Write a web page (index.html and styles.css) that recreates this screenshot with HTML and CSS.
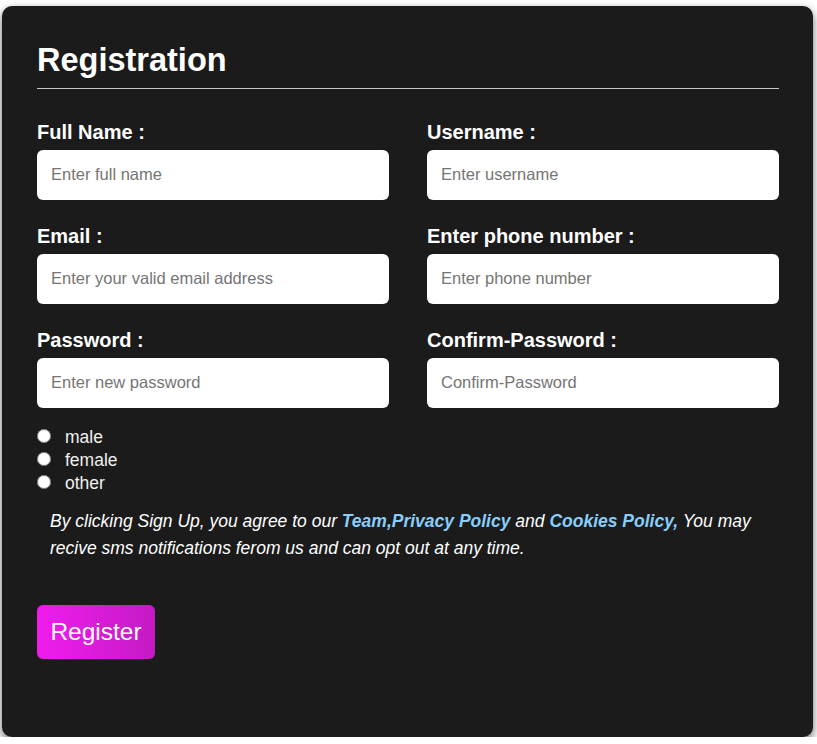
FILE: index.html
```html
<!DOCTYPE html>
<html lang="en">
<head>
<meta charset="utf-8">
<title>Registration</title>
<link rel="stylesheet" href="styles.css">
</head>
<body>
<div class="card">
  <h1 class="title">Registration</h1>
  <form class="form">
    <div class="grid">
      <div class="field">
        <label class="label">Full Name :</label>
        <input class="input" type="text" placeholder="Enter full name">
      </div>
      <div class="field">
        <label class="label">Username :</label>
        <input class="input" type="text" placeholder="Enter username">
      </div>
      <div class="field">
        <label class="label">Email :</label>
        <input class="input" type="text" placeholder="Enter your valid email address">
      </div>
      <div class="field">
        <label class="label">Enter phone number :</label>
        <input class="input" type="text" placeholder="Enter phone number">
      </div>
      <div class="field">
        <label class="label">Password :</label>
        <input class="input" type="password" placeholder="Enter new password">
      </div>
      <div class="field">
        <label class="label">Confirm-Password :</label>
        <input class="input" type="password" placeholder="Confirm-Password">
      </div>
    </div>
    <div class="radios">
      <label class="radio-row"><input class="radio" type="radio" name="gender"><span>male</span></label>
      <label class="radio-row"><input class="radio" type="radio" name="gender"><span>female</span></label>
      <label class="radio-row"><input class="radio" type="radio" name="gender"><span>other</span></label>
    </div>
    <p class="terms">By clicking Sign Up, you agree to our <a class="link" href="#">Team,Privacy Policy</a> and <a class="link" href="#">Cookies Policy,</a> You may recive sms notifications ferom us and can opt out at any time.</p>
    <button class="button" type="button">Register</button>
  </form>
</div>
</body>
</html>
```

FILE: styles.css
```css
html, body {
  margin: 0;
  padding: 0;
  background: #ffffff;
}

body {
  padding: 6px 0 0 2px;
  font-family: "Liberation Sans", Arial, sans-serif;
}

.card {
  box-sizing: border-box;
  width: 811px;
  height: 731px;
  background: #1b1b1b;
  border-radius: 10px;
  box-shadow: 0 4px 10px rgba(0, 0, 0, 0.6);
  padding: 36px 34px 0 35px;
  color: #ffffff;
}

.title {
  margin: 0;
  font-size: 32.5px;
  line-height: 37px;
  font-weight: bold;
  padding-bottom: 9px;
  border-bottom: 1px solid #c8c8c8;
}

.form {
  margin: 0;
}

.grid {
  display: grid;
  grid-template-columns: 352px 352px;
  column-gap: 38px;
  row-gap: 25px;
  margin-top: 32px;
}

.field {
  display: flex;
  flex-direction: column;
}

.label {
  font-size: 20px;
  line-height: 23px;
  font-weight: bold;
  margin-bottom: 6px;
}

.input {
  box-sizing: border-box;
  height: 50px;
  width: 100%;
  border: none;
  border-radius: 6px;
  background: #ffffff;
  padding: 0 14px 2px 14px;
  font-family: "Liberation Sans", Arial, sans-serif;
  font-size: 16.5px;
  color: #222;
  outline: none;
}

.input::placeholder {
  color: #757575;
}

.radios {
  margin-top: 18px;
  display: flex;
  flex-direction: column;
}

.radio-row {
  display: flex;
  align-items: center;
  height: 23px;
  font-size: 17.5px;
  color: #f0f0f0;
}

.radio {
  margin: 0 14px 4px 0;
  width: 14px;
  height: 14px;
}

.terms {
  margin: 13px 0 0 0;
  padding: 0 13px;
  font-size: 17.5px;
  line-height: 27px;
  font-style: italic;
  color: #ffffff;
}

.link {
  color: #87cefa;
  font-weight: bold;
  text-decoration: none;
}

.button {
  display: block;
  margin-top: 43px;
  width: 118px;
  height: 54px;
  border: none;
  border-radius: 6px;
  background: linear-gradient(to right, #f01cee, #c41ac4);
  color: #ffffff;
  font-family: "Liberation Sans", Arial, sans-serif;
  font-size: 24.5px;
  padding: 0;
  cursor: pointer;
}
```
